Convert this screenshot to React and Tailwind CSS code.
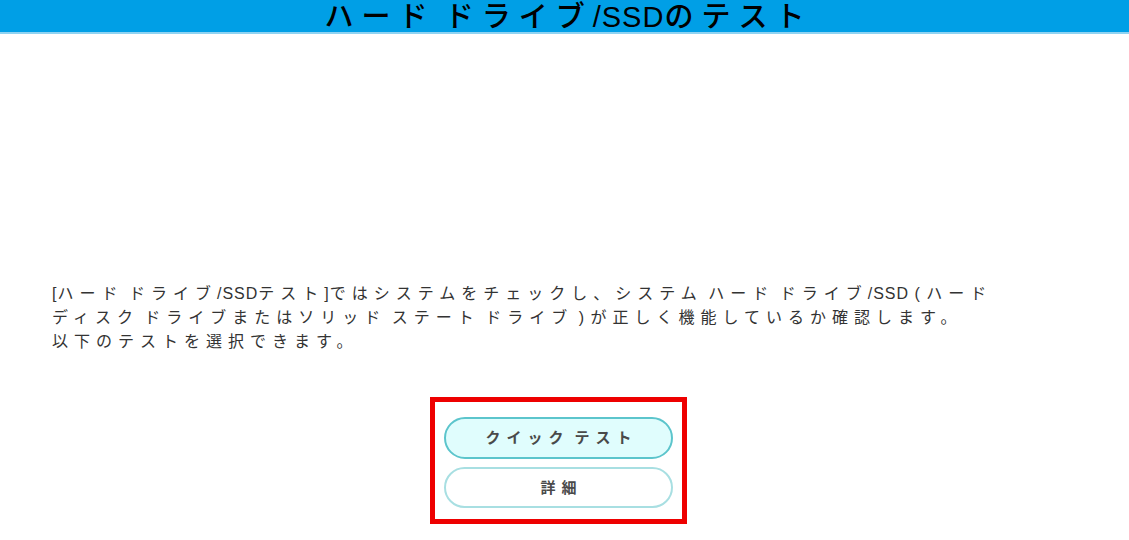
import React from 'react';

const jp = { fontFamily: '"Noto Sans CJK JP", "Noto Sans", sans-serif' };

// latin runs, spaces and brackets inside the Japanese text are set tighter than the kana
const L = ({ children }) => (
  <span className="tracking-[1px]" style={{ fontFamily: '"Liberation Sans", "Noto Sans CJK JP", sans-serif' }}>
    {children}
  </span>
);

const App = () => {
  return (
    <div className="w-[1129px] h-[540px] bg-white overflow-hidden" style={jp}>
      {/* Title bar */}
      <div className="h-[34px] bg-[#009fe6] border-b-2 border-[#8fd3f2] flex items-center justify-center">
        <h1 className="text-[29px] leading-[29px] tracking-[8px] pl-[8px] font-medium text-black">
          ハード<L> </L>ドライブ<L>/SSD</L>のテスト
        </h1>
      </div>

      {/* Description */}
      <p className="mt-[247px] ml-[52px] text-[16px] leading-[23px] tracking-[6px] text-[#333]">
        <L>[</L>ハード<L> </L>ドライブ<L>/SSD</L>テスト<L>]</L>ではシステムをチェックし、システム<L> </L>ハード<L> </L>ドライブ<L>/SSD ( </L>ハード
        <br />
        ディスク<L> </L>ドライブまたはソリッド<L> </L>ステート<L> </L>ドライブ<L> ) </L>が正しく機能しているか確認します。
        <br />
        以下のテストを選択できます。
      </p>

      {/* Test choices */}
      <div className="mt-[45px] ml-[430px] w-[257px] border-[5px] border-[#ee0000] px-[9px] pt-[15px] pb-[11px] flex flex-col gap-[8px]">
        <button className="h-[42px] rounded-full border-2 border-[#5cc5cc] bg-[#e0fdfd] text-[15px] font-semibold tracking-[6px] pl-[6px] text-[#4a4a4a]">
          クイック<L> </L>テスト
        </button>
        <button className="h-[41px] rounded-full border-2 border-[#a8dfe2] bg-white text-[15px] font-semibold tracking-[6px] pl-[6px] text-[#4a4a4a]">
          詳細
        </button>
      </div>
    </div>
  );
};

export default App;
